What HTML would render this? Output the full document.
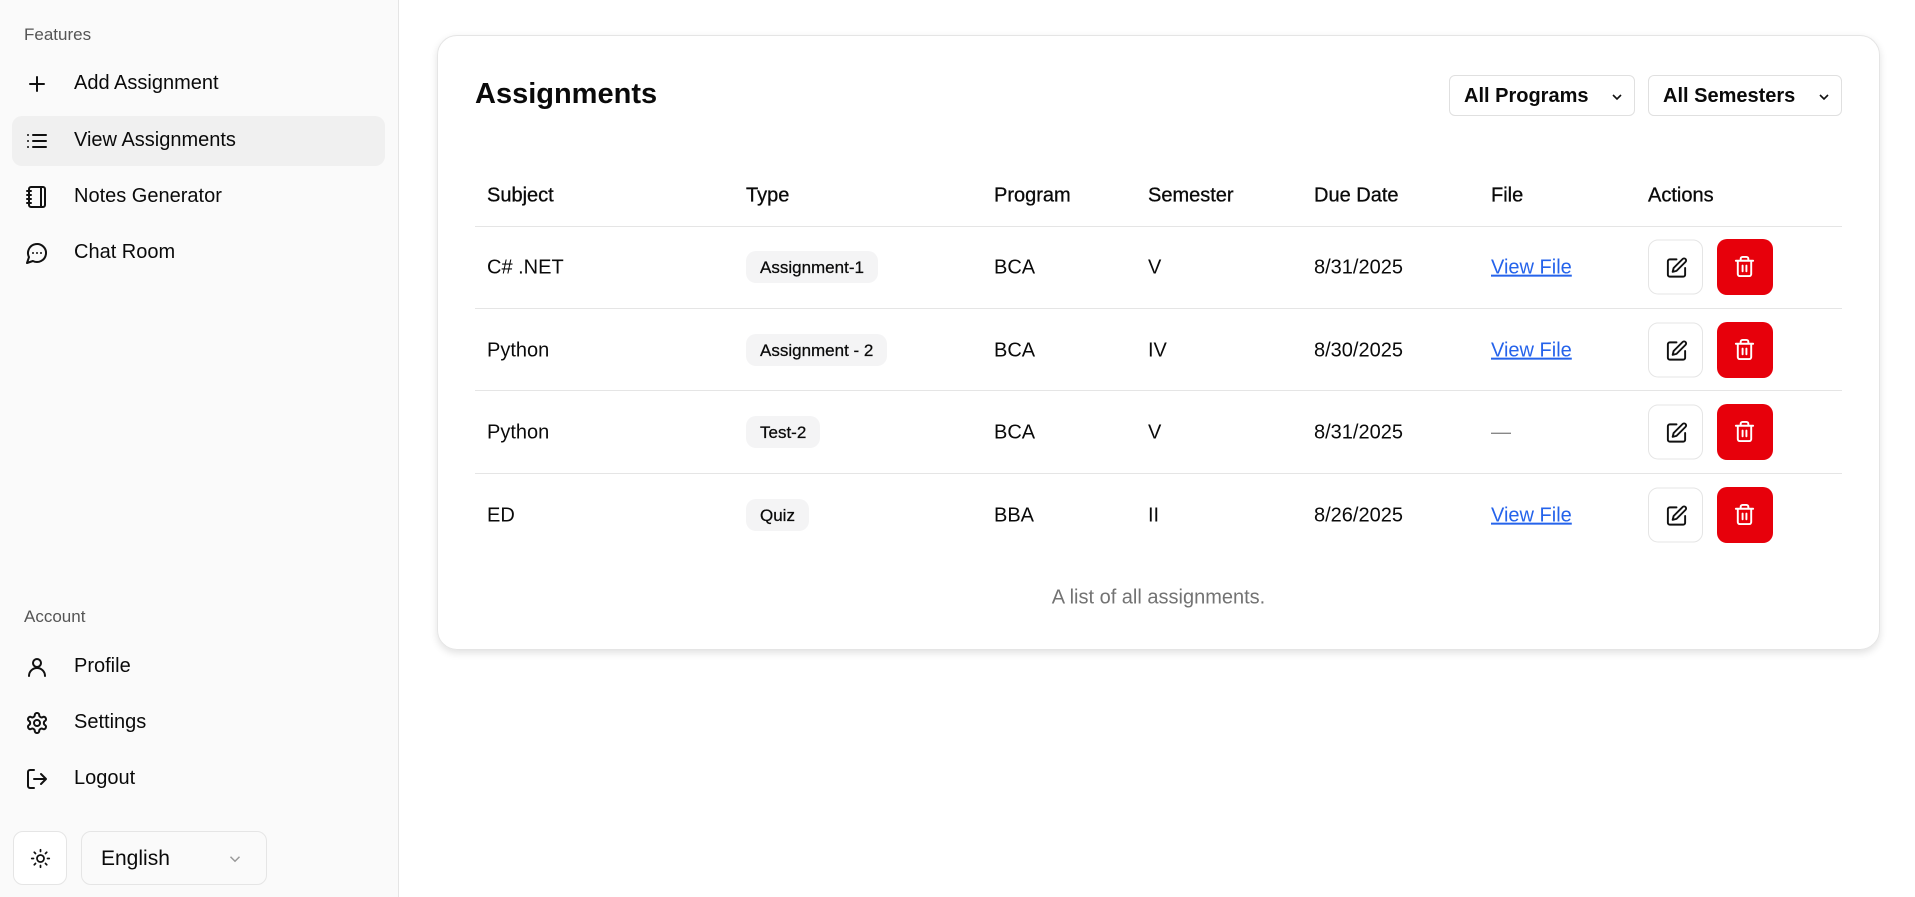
<!DOCTYPE html>
<html><head><meta charset="utf-8"><style>
*{box-sizing:border-box;margin:0;padding:0}
body{width:1915px;height:897px;position:relative;background:#fff;font-family:"Liberation Sans",sans-serif;color:#0a0a0a;overflow:hidden}
.side{position:absolute;left:0;top:0;width:399px;height:897px;background:#fafafa;border-right:1px solid #e5e5e5}
.lbl{position:absolute;left:24px;font-size:17px;color:#555}
.item{position:absolute;left:12px;width:373px;height:50px;border-radius:10px;display:flex;align-items:center;font-size:20px}
.item svg{position:absolute;left:13px;width:24px;height:24px;fill:none;stroke:#111;stroke-width:2;stroke-linecap:round;stroke-linejoin:round}
.item span{position:absolute;left:62px;top:13px}
.card{position:absolute;left:437px;top:35px;width:1443px;height:615px;border:1px solid #e5e5e5;border-radius:20px;box-shadow:0 3px 8px rgba(0,0,0,.12)}
.abs{position:absolute}
.sel{position:absolute;top:75px;height:41px;border:1px solid #e0e0e0;border-radius:6px;font-size:20px;font-weight:bold;padding-left:14px;line-height:40px}
.sel svg{position:absolute;right:9px;top:13px;width:16px;height:16px;fill:none;stroke:#111;stroke-width:2.4}
.hr{position:absolute;left:475px;width:1367px;height:1px;background:#e5e5e5}
.t{position:absolute;font-size:20px;transform:translateY(-45%)}
.h{font-weight:500;-webkit-text-stroke:.3px #0a0a0a}
.b{position:absolute;height:32px;background:#f4f4f5;border-radius:10px;font-size:17px;padding:0 14px;line-height:33px;transform:translateY(-50%);-webkit-text-stroke:.25px #0a0a0a}
.lnk{color:#2563eb;text-decoration:underline}
.eb{position:absolute;left:1648px;width:55px;height:55px;border:1px solid #e5e5e5;border-radius:10px;background:#fff;transform:translateY(-50%)}
.db{position:absolute;left:1717px;width:56px;height:56px;border-radius:10px;background:#e7000b;transform:translateY(-50%)}
.eb svg,.db svg{position:absolute;left:16px;top:16px;width:23px;height:23px;fill:none;stroke-width:2;stroke-linecap:round;stroke-linejoin:round}
</style></head><body>
<div class="side">
<div class="lbl" style="top:25px">Features</div>
<div class="item" style="top:59px"><svg viewBox="0 0 24 24"><path d="M5 12h14M12 5v14"/></svg><span>Add Assignment</span></div>
<div class="item" style="top:116px;background:#f0f0f0"><svg viewBox="0 0 24 24"><path d="M3 6h.01M3 12h.01M3 18h.01M8 6h13M8 12h13M8 18h13"/></svg><span>View Assignments</span></div>
<div class="item" style="top:172px"><svg viewBox="0 0 24 24"><path d="M2 6h4M2 10h4M2 14h4M2 18h4"/><rect x="4" y="2" width="16" height="20" rx="2"/><path d="M16 2v20"/></svg><span>Notes Generator</span></div>
<div class="item" style="top:228px"><svg viewBox="0 0 24 24"><path d="M7.9 20A9 9 0 1 0 4 16.1L2 22Z"/><path d="M8 12h.01M12 12h.01M16 12h.01"/></svg><span>Chat Room</span></div>
<div class="lbl" style="top:607px">Account</div>
<div class="item" style="top:642px"><svg viewBox="0 0 24 24"><circle cx="12" cy="8" r="4"/><path d="M20 21a8 8 0 0 0-16 0"/></svg><span>Profile</span></div>
<div class="item" style="top:698px"><svg viewBox="0 0 24 24"><path d="M12.22 2h-.44a2 2 0 0 0-2 2v.18a2 2 0 0 1-1 1.73l-.43.25a2 2 0 0 1-2 0l-.15-.08a2 2 0 0 0-2.73.73l-.22.38a2 2 0 0 0 .73 2.73l.15.1a2 2 0 0 1 1 1.720v.51a2 2 0 0 1-1 1.74l-.15.09a2 2 0 0 0-.73 2.73l.22.38a2 2 0 0 0 2.73.73l.15-.08a2 2 0 0 1 2 0l.43.25a2 2 0 0 1 1 1.73V20a2 2 0 0 0 2 2h.44a2 2 0 0 0 2-2v-.18a2 2 0 0 1 1-1.73l.43-.25a2 2 0 0 1 2 0l.15.08a2 2 0 0 0 2.73-.73l.22-.39a2 2 0 0 0-.73-2.73l-.15-.08a2 2 0 0 1-1-1.74v-.5a2 2 0 0 1 1-1.74l.15-.09a2 2 0 0 0 .73-2.73l-.22-.38a2 2 0 0 0-2.73-.73l-.15.08a2 2 0 0 1-2 0l-.43-.25a2 2 0 0 1-1-1.73V4a2 2 0 0 0-2-2z"/><circle cx="12" cy="12" r="3"/></svg><span>Settings</span></div>
<div class="item" style="top:754px"><svg viewBox="0 0 24 24"><path d="M9 21H5a2 2 0 0 1-2-2V5a2 2 0 0 1 2-2h4M16 17l5-5-5-5M21 12H9"/></svg><span>Logout</span></div>
<div class="abs" style="left:13px;top:831px;width:54px;height:54px;border:1px solid #e5e5e5;border-radius:10px;background:#fff"><svg viewBox="0 0 24 24" style="position:absolute;left:16px;top:16px;width:21px;height:21px;fill:none;stroke:#111;stroke-width:2;stroke-linecap:round"><circle cx="12" cy="12" r="4"/><path d="M12 2v2M12 20v2M4.9 4.9l1.4 1.4M17.7 17.7l1.4 1.4M2 12h2M20 12h2M6.3 17.7l-1.4 1.4M19.1 4.9l-1.4 1.4"/></svg></div>
<div class="abs" style="left:81px;top:831px;width:186px;height:54px;border:1px solid #e5e5e5;border-radius:10px;font-size:21px;line-height:54px;padding-left:19px">English<svg viewBox="0 0 24 24" style="position:absolute;right:22px;top:18px;width:18px;height:18px;fill:none;stroke:#999;stroke-width:2"><path d="M6 9l6 6 6-6"/></svg></div>
</div>
<div class="card"></div>
<div class="abs" style="left:475px;top:78px;font-size:29px;font-weight:bold">Assignments</div>
<div class="sel" style="left:1449px;width:186px">All Programs<svg viewBox="0 0 24 24"><path d="M6 9l6 6 6-6"/></svg></div>
<div class="sel" style="left:1648px;width:194px">All Semesters<svg viewBox="0 0 24 24"><path d="M6 9l6 6 6-6"/></svg></div>
<div class="t h" style="left:487px;top:195px">Subject</div>
<div class="t h" style="left:746px;top:195px">Type</div>
<div class="t h" style="left:994px;top:195px">Program</div>
<div class="t h" style="left:1148px;top:195px">Semester</div>
<div class="t h" style="left:1314px;top:195px">Due Date</div>
<div class="t h" style="left:1491px;top:195px">File</div>
<div class="t h" style="left:1648px;top:195px">Actions</div>
<div class="hr" style="top:226px"></div>
<div class="hr" style="top:308px"></div>
<div class="hr" style="top:390px"></div>
<div class="hr" style="top:473px"></div>

<div class="t" style="left:487px;top:267px">C# .NET</div><div class="b" style="left:746px;top:267px">Assignment-1</div><div class="t" style="left:994px;top:267px">BCA</div><div class="t" style="left:1148px;top:267px">V</div><div class="t" style="left:1314px;top:267px">8/31/2025</div><div class="t lnk" style="left:1491px;top:267px">View File</div>
<div class="t" style="left:487px;top:350px">Python</div><div class="b" style="left:746px;top:350px">Assignment - 2</div><div class="t" style="left:994px;top:350px">BCA</div><div class="t" style="left:1148px;top:350px">IV</div><div class="t" style="left:1314px;top:350px">8/30/2025</div><div class="t lnk" style="left:1491px;top:350px">View File</div>
<div class="t" style="left:487px;top:432px">Python</div><div class="b" style="left:746px;top:432px">Test-2</div><div class="t" style="left:994px;top:432px">BCA</div><div class="t" style="left:1148px;top:432px">V</div><div class="t" style="left:1314px;top:432px">8/31/2025</div><div class="t" style="left:1491px;top:432px;color:#888">—</div>
<div class="t" style="left:487px;top:515px">ED</div><div class="b" style="left:746px;top:515px">Quiz</div><div class="t" style="left:994px;top:515px">BBA</div><div class="t" style="left:1148px;top:515px">II</div><div class="t" style="left:1314px;top:515px">8/26/2025</div><div class="t lnk" style="left:1491px;top:515px">View File</div>

<div class="eb" style="top:267px"><svg viewBox="0 0 24 24" style="stroke:#111"><path d="M12 3H5a2 2 0 0 0-2 2v14a2 2 0 0 0 2 2h14a2 2 0 0 0 2-2v-7"/><path d="M18.4 2.6a2.1 2.1 0 0 1 3 3L12 15l-4 1 1-4Z"/></svg></div>
<div class="db" style="top:267px"><svg viewBox="0 0 24 24" style="stroke:#fff"><path d="M3 6h18M19 6v14a2 2 0 0 1-2 2H7a2 2 0 0 1-2-2V6M8 6V4a2 2 0 0 1 2-2h4a2 2 0 0 1 2 2v2M10 11v6M14 11v6"/></svg></div>
<div class="eb" style="top:350px"><svg viewBox="0 0 24 24" style="stroke:#111"><path d="M12 3H5a2 2 0 0 0-2 2v14a2 2 0 0 0 2 2h14a2 2 0 0 0 2-2v-7"/><path d="M18.4 2.6a2.1 2.1 0 0 1 3 3L12 15l-4 1 1-4Z"/></svg></div>
<div class="db" style="top:350px"><svg viewBox="0 0 24 24" style="stroke:#fff"><path d="M3 6h18M19 6v14a2 2 0 0 1-2 2H7a2 2 0 0 1-2-2V6M8 6V4a2 2 0 0 1 2-2h4a2 2 0 0 1 2 2v2M10 11v6M14 11v6"/></svg></div>
<div class="eb" style="top:432px"><svg viewBox="0 0 24 24" style="stroke:#111"><path d="M12 3H5a2 2 0 0 0-2 2v14a2 2 0 0 0 2 2h14a2 2 0 0 0 2-2v-7"/><path d="M18.4 2.6a2.1 2.1 0 0 1 3 3L12 15l-4 1 1-4Z"/></svg></div>
<div class="db" style="top:432px"><svg viewBox="0 0 24 24" style="stroke:#fff"><path d="M3 6h18M19 6v14a2 2 0 0 1-2 2H7a2 2 0 0 1-2-2V6M8 6V4a2 2 0 0 1 2-2h4a2 2 0 0 1 2 2v2M10 11v6M14 11v6"/></svg></div>
<div class="eb" style="top:515px"><svg viewBox="0 0 24 24" style="stroke:#111"><path d="M12 3H5a2 2 0 0 0-2 2v14a2 2 0 0 0 2 2h14a2 2 0 0 0 2-2v-7"/><path d="M18.4 2.6a2.1 2.1 0 0 1 3 3L12 15l-4 1 1-4Z"/></svg></div>
<div class="db" style="top:515px"><svg viewBox="0 0 24 24" style="stroke:#fff"><path d="M3 6h18M19 6v14a2 2 0 0 1-2 2H7a2 2 0 0 1-2-2V6M8 6V4a2 2 0 0 1 2-2h4a2 2 0 0 1 2 2v2M10 11v6M14 11v6"/></svg></div>

<div class="t" style="left:475px;width:1367px;text-align:center;top:597px;color:#737373">A list of all assignments.</div>
</body></html>
